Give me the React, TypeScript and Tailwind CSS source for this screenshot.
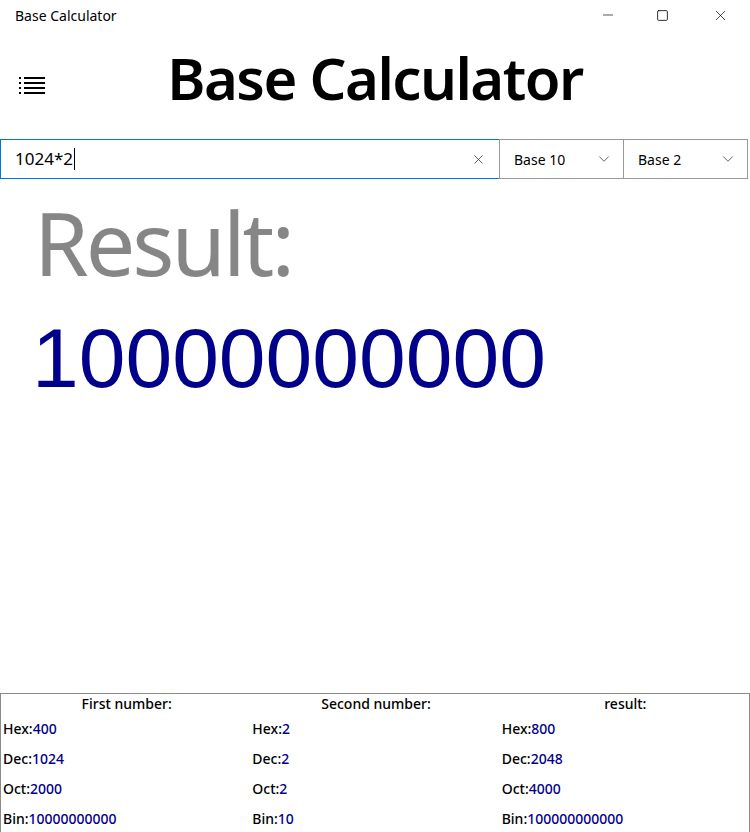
import { X, ChevronDown, Minus, Square } from 'lucide-react';

const font = { fontFamily: '"Noto Sans", "Open Sans", sans-serif' };

type Conv = { hex: string; dec: string; oct: string; bin: string };

const columns: { title: string; v: Conv }[] = [
  { title: 'First number:', v: { hex: '400', dec: '1024', oct: '2000', bin: '10000000000' } },
  { title: 'Second number:', v: { hex: '2', dec: '2', oct: '2', bin: '10' } },
  { title: 'result:', v: { hex: '800', dec: '2048', oct: '4000', bin: '100000000000' } },
];

function MenuIcon() {
  return (
    <svg width="26" height="18" viewBox="0 0 26 18" className="block">
      {[0, 5, 10, 15].map((y) => (
        <g key={y}>
          <rect x="0" y={y} width="2" height="2" fill="#000" />
          <rect x="5" y={y} width="21" height="2" fill="#000" />
        </g>
      ))}
    </svg>
  );
}

function Combo({ label }: { label: string }) {
  return (
    <div className="w-[125px] h-10 border border-[#999999] -ml-px flex items-center justify-between pl-[14px] pr-[10px] text-[14px] text-black">
      <span>{label}</span>
      <ChevronDown size={18} strokeWidth={1} className="text-[#333]" />
    </div>
  );
}

export default function App() {
  return (
    <div className="w-[750px] h-[832px] bg-white overflow-hidden flex flex-col" style={font}>
      {/* title bar */}
      <div className="h-[30px] flex items-center justify-between">
        <span className="pl-[15px] text-[14px] text-black">Base Calculator</span>
        <div className="flex h-full">
          <div className="w-[55px] flex items-center justify-center">
            <Minus size={16} strokeWidth={1} />
          </div>
          <div className="w-[55px] flex items-center justify-center">
            <Square size={13} strokeWidth={1.5} />
          </div>
          <div className="w-[60px] flex items-center justify-center">
            <X size={17} strokeWidth={1} />
          </div>
        </div>
      </div>

      {/* header */}
      <div className="h-[109px] flex items-center relative">
        <div className="pl-[19px] pt-[2px]">
          <MenuIcon />
        </div>
        <h1 className="absolute left-0 right-0 text-center text-[58px] font-semibold tracking-[-1.5px] text-black leading-none pb-[14px]">
          Base Calculator
        </h1>
      </div>

      {/* input row */}
      <div className="flex">
        <div className="w-[500px] h-10 border border-[#0078d7] flex items-center justify-between pl-[14px] pr-[13px]">
          <span className="text-[17px] text-black flex items-center">
            1024*2<span className="inline-block w-px h-[22px] bg-black ml-px" />
          </span>
          <X size={15} strokeWidth={1.25} className="text-[#333]" />
        </div>
        <Combo label="Base 10" />
        <Combo label="Base 2" />
      </div>

      {/* result */}
      <div className="flex-1 pl-[30px]">
        <div className="text-[88px] text-[#868686] leading-none mt-[19px] ml-[4px] tracking-[-3px]">Result:</div>
        <div
          className="text-[84px] text-[#00008b] leading-none mt-[30px] ml-[2px]"
          style={{ fontFamily: '"Liberation Sans", Arial, sans-serif' }}
        >
          10000000000
        </div>
      </div>

      {/* conversions */}
      <div className="h-[139px] border border-[#8a8a8a] border-b-0 grid grid-cols-3 w-[750px]">
        {columns.map((c) => (
          <div key={c.title} className="flex flex-col pl-[2px]">
            <div className="text-center text-[14px] font-medium text-black h-[20px] leading-[20px]">{c.title}</div>
            {(['hex', 'dec', 'oct', 'bin'] as const).map((k) => (
              <div key={k} className="h-[30px] leading-[30px] text-[14px] font-medium">
                <span className="text-black">{k[0].toUpperCase() + k.slice(1)}:</span>
                <span className="text-[#00008b]">{c.v[k]}</span>
              </div>
            ))}
          </div>
        ))}
      </div>
    </div>
  );
}
